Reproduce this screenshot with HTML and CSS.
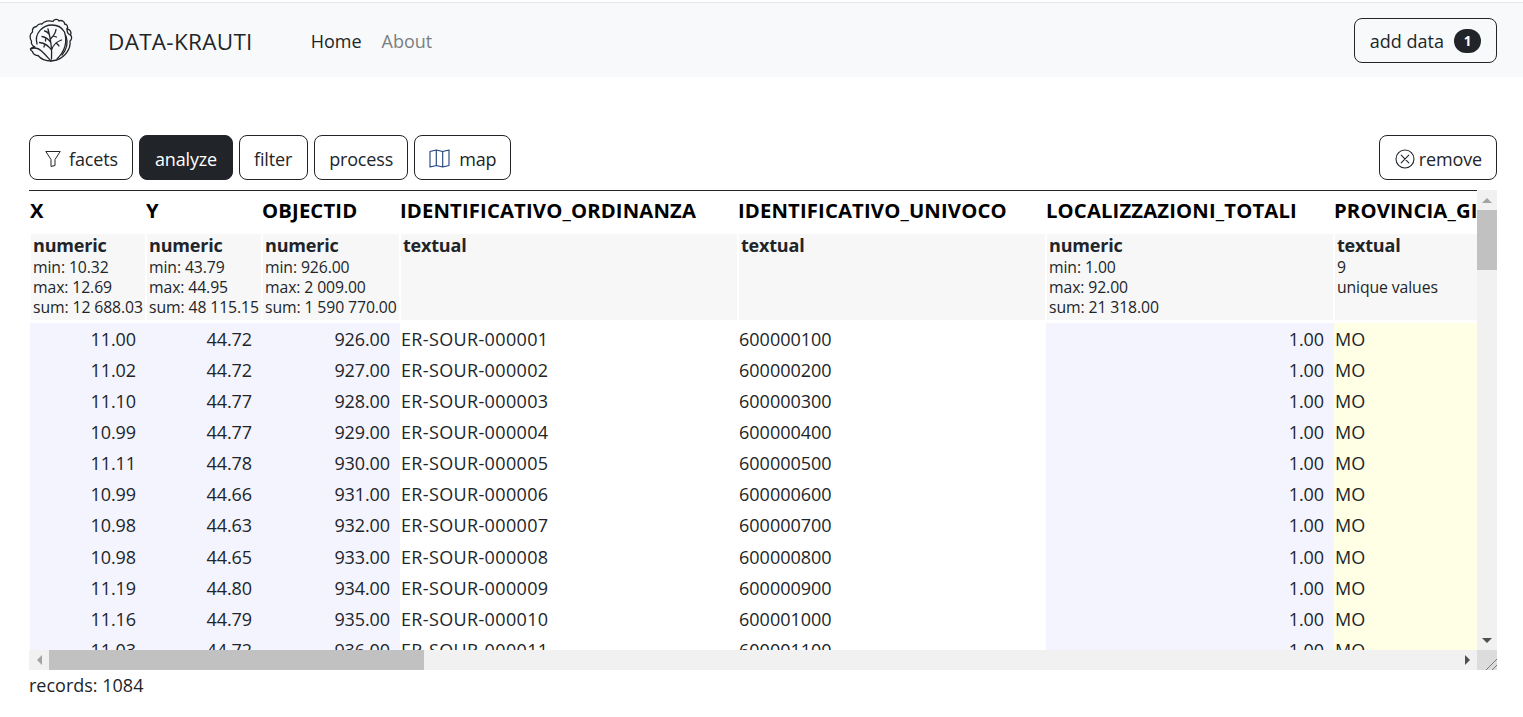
FILE: index.html
```html
<!DOCTYPE html>
<html lang="en">
<head>
<meta charset="utf-8">
<title>DATA-KRAUTI</title>
<link rel="stylesheet" href="styles.css">
</head>
<body>
<nav class="navbar">
  <svg class="logo" viewBox="0 0 44 44" fill="none" stroke="#212529" stroke-width="1.300" stroke-linecap="round" stroke-linejoin="round">
    <path d="M13 6C15 3 20 2 24 3.500C25 1 29 .5 30 3C33 1.500 36 4 35.500 6C38 6 39.500 9 38 11C41 11.500 43 14 41.500 17C43.500 19 42.500 22 41 23C42 31 36 39 28 42L22 43C16 43 12 41 9 37.500C6 38 3.500 35 3.500 33.500C2.500 33 1.500 32 1.500 31C3 29 4.500 29 6 29C3 27.500 2 25 2.500 23C.5 20 .5 16 3.500 14C3 11 5 9 7.500 8.500C9 6 11 5.500 13 6Z"/>
    <path d="M8 26C5 15 14 7 23 7C28 7 33 9.500 35.500 14C38 22 37 32 28 41"/>
    <path d="M1.500 31C6 29 10 30.500 12.500 33C16 36 20 41 22 43"/>
    <path d="M41.500 17C39.500 16.500 38 14 38 11M37 18C39 24 38 31 33 37"/>
    <path d="M22.500 41C23 33 22 22 19 11M22.500 32C19 27 15 25 10.500 24.500M16 26C15.500 27 15 28 15 29M21.500 24C19 20.500 15.500 19 13 18.500M17 20C16.500 21 16.500 22 16.500 23M20 16C18.500 14 17 13 15.500 13M22.500 32C24 27 28 23.500 32.500 22M27 25C28.500 26 29.500 27 30 28M21.500 21C24 18.500 26.500 15.500 27 11.500M24 18L27.500 19"/>
  </svg>
  <span class="brand">DATA-KRAUTI</span>
  <a class="nav-link active">Home</a>
  <a class="nav-link">About</a>
  <button class="btn add-btn">add data <span class="badge">1</span></button>
</nav>
<main class="content">
  <div class="toolbar">
    <button class="btn facets"><svg class="icon funnel" viewBox="0 0 16 17" fill="none" stroke="#212529" stroke-width="1" stroke-linejoin="round"><path d="M.8 1.500h14.400L10 9.500v6l-4 1V9.500z"/></svg>facets</button>
    <button class="btn dark">analyze</button>
    <button class="btn filter">filter</button>
    <button class="btn tight">process</button>
    <button class="btn tight"><svg class="icon map-icon" viewBox="0 0 21 19" fill="none" stroke="#1f3f7a" stroke-width="1.100" stroke-linejoin="round"><path d="M1 2.500l6.300-1.500 6.400 1.500L20 1v15.500L13.700 18l-6.400-1.500L1 18zM7.300 1v15.500M13.700 2.500V18"/></svg>map</button>
    <button class="btn remove"><svg class="icon x-circle" viewBox="0 0 20 20" fill="none" stroke="#212529" stroke-width="1.100" stroke-linecap="round"><circle cx="10" cy="10" r="9"/><path d="M6.200 6.200l7.600 7.600M13.800 6.200l-7.600 7.600"/></svg>remove</button>
  </div>
  <div class="table-frame">
    <div class="table-view">
      <table class="data">
        <colgroup>
          <col class="c1"><col class="c2"><col class="c3"><col class="c4"><col class="c5"><col class="c6"><col class="c7">
        </colgroup>
        <thead>
          <tr class="names">
            <th>X</th><th>Y</th><th>OBJECTID</th><th>IDENTIFICATIVO_ORDINANZA</th><th>IDENTIFICATIVO_UNIVOCO</th><th>LOCALIZZAZIONI_TOTALI</th><th>PROVINCIA_GI</th>
          </tr>
          <tr class="stats">
            <td><div><b>numeric</b>min: 10.32<br>max: 12.69<br>sum: 12 688.03</div></td>
            <td><div><b>numeric</b>min: 43.79<br>max: 44.95<br>sum: 48 115.15</div></td>
            <td><div><b>numeric</b>min: 926.00<br>max: 2 009.00<br>sum: 1 590 770.00</div></td>
            <td><div><b>textual</b></div></td>
            <td><div><b>textual</b></div></td>
            <td><div><b>numeric</b>min: 1.00<br>max: 92.00<br>sum: 21 318.00</div></td>
            <td><div><b>textual</b>9<br>unique values</div></td>
          </tr>
        </thead>
        <tbody>
          <tr><td class="num">11.00</td><td class="num">44.72</td><td class="num">926.00</td><td class="code">ER-SOUR-000001</td><td>600000100</td><td class="num">1.00</td><td class="cat">MO</td></tr>
          <tr><td class="num">11.02</td><td class="num">44.72</td><td class="num">927.00</td><td class="code">ER-SOUR-000002</td><td>600000200</td><td class="num">1.00</td><td class="cat">MO</td></tr>
          <tr><td class="num">11.10</td><td class="num">44.77</td><td class="num">928.00</td><td class="code">ER-SOUR-000003</td><td>600000300</td><td class="num">1.00</td><td class="cat">MO</td></tr>
          <tr><td class="num">10.99</td><td class="num">44.77</td><td class="num">929.00</td><td class="code">ER-SOUR-000004</td><td>600000400</td><td class="num">1.00</td><td class="cat">MO</td></tr>
          <tr><td class="num">11.11</td><td class="num">44.78</td><td class="num">930.00</td><td class="code">ER-SOUR-000005</td><td>600000500</td><td class="num">1.00</td><td class="cat">MO</td></tr>
          <tr><td class="num">10.99</td><td class="num">44.66</td><td class="num">931.00</td><td class="code">ER-SOUR-000006</td><td>600000600</td><td class="num">1.00</td><td class="cat">MO</td></tr>
          <tr class="tall"><td class="num">10.98</td><td class="num">44.63</td><td class="num">932.00</td><td class="code">ER-SOUR-000007</td><td>600000700</td><td class="num">1.00</td><td class="cat">MO</td></tr>
          <tr><td class="num">10.98</td><td class="num">44.65</td><td class="num">933.00</td><td class="code">ER-SOUR-000008</td><td>600000800</td><td class="num">1.00</td><td class="cat">MO</td></tr>
          <tr><td class="num">11.19</td><td class="num">44.80</td><td class="num">934.00</td><td class="code">ER-SOUR-000009</td><td>600000900</td><td class="num">1.00</td><td class="cat">MO</td></tr>
          <tr><td class="num">11.16</td><td class="num">44.79</td><td class="num">935.00</td><td class="code">ER-SOUR-000010</td><td>600001000</td><td class="num">1.00</td><td class="cat">MO</td></tr>
          <tr><td class="num">11.03</td><td class="num">44.72</td><td class="num">936.00</td><td class="code">ER-SOUR-000011</td><td>600001100</td><td class="num">1.00</td><td class="cat">MO</td></tr>
        </tbody>
      </table>
    </div>
    <div class="vbar">
      <span class="sb-btn"><i class="arrow up"></i></span>
      <span class="vthumb"></span>
      <span class="sb-track"></span>
      <span class="sb-btn"><i class="arrow down"></i></span>
    </div>
    <div class="hbar">
      <span class="sb-btn"><i class="arrow left"></i></span>
      <span class="hthumb"></span>
      <span class="sb-track"></span>
      <span class="sb-btn"><i class="arrow right"></i></span>
    </div>
    <div class="corner">
      <svg viewBox="0 0 20 20" fill="none" stroke="#7a7a7a" stroke-width="1"><path d="M9 20L20 9M15 20l5-5"/></svg>
    </div>
  </div>
  <p class="records">records: 1084</p>
</main>
</body>
</html>
```
FILE: styles.css
```css
* { box-sizing: border-box; }
html, body { margin: 0; height: 100%; overflow: hidden; }
body {
  padding-top: 2px;
  font-family: "Open Sans", "Noto Sans", sans-serif;
  font-size: 18px;
  color: #212529;
  background: #fff;
}
.navbar {
  display: flex;
  align-items: center;
  height: 75px;
  padding: 2px 26px 0 29px;
  background: #f8f9fa;
  border-top: 1px solid #e7e7e7;
}
.logo { width: 44px; height: 44px; margin: -2px 35px 0 0; }
.brand { font-size: 22.500px; margin-right: 58px; letter-spacing: 0.3px; }
.nav-link { margin-right: 20px; color: #212529; }
.nav-link:not(.active) { color: #7b7f83; }
.btn {
  display: inline-flex;
  align-items: center;
  height: 45px;
  padding: 2px 15px 0;
  font: inherit;
  letter-spacing: -0.15px;
  color: #212529;
  background: transparent;
  border: 1px solid #212529;
  border-radius: 8px;
}
.tight { padding: 2px 14px 0; }
.filter { padding: 2px 15px 0 14px; }
.facets { padding-right: 14px; }
.add-btn { margin: -2px 0 0 auto; letter-spacing: 0; }
.badge {
  display: inline-flex;
  align-items: center;
  justify-content: center;
  width: 27px;
  height: 24px;
  margin-left: 10px;
  font-size: 13.500px;
  font-weight: 700;
  color: #fff;
  background: #212529;
  border-radius: 12px;
}
.content { padding: 58px 26px 0 29px; }
.toolbar { display: flex; gap: 6px; margin-bottom: 10px; }
.dark { color: #fff; background: #212529; }
.remove { margin-left: auto; padding-right: 14px; }
.icon { flex: none; }
.funnel { width: 16px; height: 17px; margin-right: 8px; }
.map-icon { width: 21px; height: 19px; margin-right: 9px; }
.x-circle { width: 20px; height: 20px; margin-right: 4px; }
.table-frame {
  display: grid;
  grid-template-columns: 1fr 20px;
  grid-template-rows: 460px 20px;
  height: 480px;
}
.table-view {
  overflow: hidden;
  border-top: 1px solid #212529;
}
.data {
  width: 1604px;
  margin-left: 1px;
  table-layout: fixed;
  border-collapse: collapse;
  white-space: nowrap;
}
.c1 { width: 116px; }
.c2 { width: 116px; }
.c3 { width: 138px; }
.c4 { width: 338px; }
.c5 { width: 308px; }
.c6 { width: 288px; }
.c7 { width: 300px; }
.names th {
  height: 42px;
  padding: 0 0 4px 0;
  font-size: 20.250px;
  font-weight: 700;
  text-align: left;
  color: #000;
  overflow: hidden;
  letter-spacing: 0.15px;
}
.stats td { padding: 1px; vertical-align: top; padding-bottom: 3px; }
.stats div {
  height: 86px;
  padding: 0 0 0 2px;
  font-size: 15.750px;
  line-height: 20px;
  background: #f7f7f7;
  overflow: hidden;
  letter-spacing: -0.1px;
}
.stats b { display: block; margin-top: -1px; font-size: 18px; line-height: 24px; letter-spacing: -0.2px; }
tbody tr { height: 31px; }
tbody .tall { height: 32px; }
tbody td { padding: 0 1px; }
.num { padding-right: 10px; text-align: right; letter-spacing: -0.1px; background: #f4f4fe; }
.code { letter-spacing: 0.35px; }
.cat { background: #ffffe6; }
.vbar, .hbar { display: flex; background: #f1f1f1; }
.vbar { flex-direction: column; }
.sb-btn {
  flex: none;
  display: flex;
  align-items: center;
  justify-content: center;
  width: 20px;
  height: 20px;
}
.sb-track { flex: 1; }
.vthumb { flex: none; height: 60px; background: #c1c1c1; }
.hthumb { flex: none; width: 375px; background: #c1c1c1; }
.arrow { display: block; width: 0; height: 0; border: solid transparent; }
.up { border-width: 0 5px 5px; border-bottom-color: #a3a3a3; }
.down { border-width: 5px 5px 0; border-top-color: #505050; }
.left { border-width: 5px 5px 5px 0; border-right-color: #a3a3a3; }
.right { border-width: 5px 0 5px 5px; border-left-color: #505050; }
.corner { background: #dcdcdc; }
.corner svg { display: block; width: 20px; height: 20px; }
.records { margin: 3px 0 0; }
```
